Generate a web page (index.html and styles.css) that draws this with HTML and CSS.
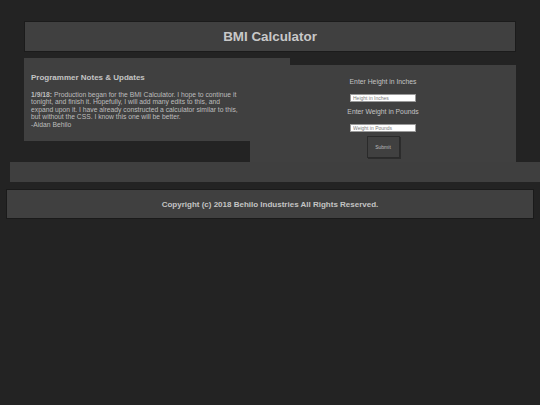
FILE: index.html
```html
<!DOCTYPE html>
<html lang="en">
<head>
<meta charset="utf-8">
<title>BMI Calculator</title>
<link rel="stylesheet" href="styles.css">
</head>
<body>
<header class="header"><h1 class="title">BMI Calculator</h1></header>
<div class="wrapper">
  <div class="row">
    <section class="notes">
      <h2 class="notes-title">Programmer Notes &amp; Updates</h2>
      <p class="notes-text"><b>1/9/18:</b> Production began for the BMI Calculator. I hope to continue it<br>tonight, and finish it. Hopefully, I will add many edits to this, and<br>expand upon it. I have already constructed a calculator similar to this,<br>but without the CSS. I know this one will be better.<br>-Aidan Behilo</p>
    </section>
    <form class="calc">
      <label class="calc-label" for="h">Enter Height in Inches</label>
      <input class="calc-input" id="h" type="text" placeholder="Height in Inches">
      <label class="calc-label second" for="w">Enter Weight in Pounds</label>
      <input class="calc-input" id="w" type="text" placeholder="Weight in Pounds">
      <button class="calc-btn" type="button">Submit</button>
    </form>
  </div>
  <div class="strip"></div>
</div>
<footer class="footer">Copyright (c) 2018 Behilo Industries All Rights Reserved.</footer>
</body>
</html>
```
FILE: styles.css
```css
html, body {
  margin: 0;
  padding: 0;
  background: #232323;
  font-family: "Liberation Sans", Arial, sans-serif;
  color: #c4c4c4;
}

.header {
  box-sizing: border-box;
  margin: 21px 24px 0;
  height: 31px;
  background: #404040;
  border: 1px solid #1b1b1b;
  display: flex;
  align-items: center;
  justify-content: center;
}

.title {
  margin: 0;
  font-size: 13.4px;
  font-weight: bold;
  color: #c8c8c8;
  line-height: 1;
}

.wrapper {
  margin: 6px 0 0 10px;
}

.row {
  display: flex;
  align-items: flex-start;
  padding-left: 14px;
  height: 104px;
}

.notes {
  box-sizing: border-box;
  width: 266px;
  height: 83px;
  background: #404040;
  padding: 15px 7px 0;
  flex: none;
}

.notes-title {
  margin: 0;
  font-size: 8px;
  font-weight: bold;
  line-height: 10px;
  color: #c4c4c4;
}

.notes-text {
  margin: 7.5px 0 0;
  font-size: 6.75px;
  line-height: 7.6px;
  color: #bdbdbd;
}

.notes-text b {
  font-weight: bold;
}

.calc {
  box-sizing: border-box;
  width: 266px;
  height: 97px;
  margin: 7px 0 0 -40px;
  background: #404040;
  display: flex;
  flex-direction: column;
  align-items: center;
  padding-top: 13px;
  flex: none;
}

.calc-label {
  font-size: 6.8px;
  line-height: 8px;
  height: 8px;
  color: #c4c4c4;
}

.calc-label.second {
  margin-top: 6px;
}

.calc-input {
  box-sizing: border-box;
  width: 66px;
  height: 8px;
  margin: 8px 0 0;
  padding: 0 2px;
  border: 1px solid #9a9a9a;
  background: #ffffff;
  font-family: "Liberation Sans", Arial, sans-serif;
  font-size: 5px;
  color: #444;
  outline: none;
}

.calc-input::placeholder {
  color: #7a7a7a;
}

.calc-btn {
  box-sizing: border-box;
  margin-top: 4px;
  width: 33px;
  height: 22px;
  padding: 0;
  background: #404040;
  border: 1px solid #2a2a2a;
  box-shadow: 1px 1px 0 #2c2c2c;
  font-family: "Liberation Sans", Arial, sans-serif;
  font-size: 5px;
  color: #bdbdbd;
}

.strip {
  height: 20px;
  background: #3f3f3f;
}

.footer {
  box-sizing: border-box;
  margin: 7px 6px 0;
  height: 30px;
  background: #404040;
  border: 1px solid #1a1a1a;
  display: flex;
  align-items: center;
  justify-content: center;
  font-size: 8px;
  font-weight: bold;
  color: #c4c4c4;
}
```
